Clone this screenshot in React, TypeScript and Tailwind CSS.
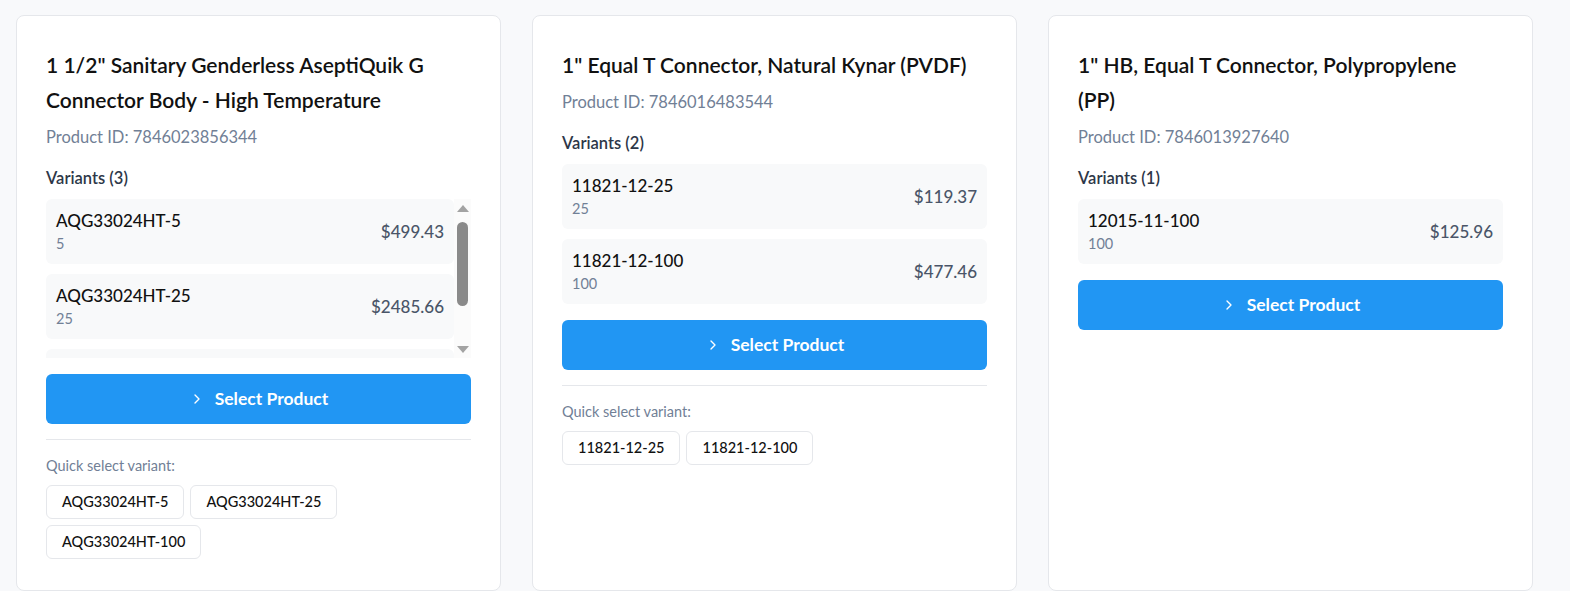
import { ChevronRight } from 'lucide-react';

type Variant = { sku: string; qty: string; price: string };
type Product = { title: string; id: string; variants: Variant[] };

const products: Product[] = [
  {
    title: '1 1/2" Sanitary Genderless AseptiQuik G Connector Body - High Temperature',
    id: '7846023856344',
    variants: [
      { sku: 'AQG33024HT-5', qty: '5', price: '$499.43' },
      { sku: 'AQG33024HT-25', qty: '25', price: '$2485.66' },
      { sku: 'AQG33024HT-100', qty: '100', price: '$9942.64' },
    ],
  },
  {
    title: '1" Equal T Connector, Natural Kynar (PVDF)',
    id: '7846016483544',
    variants: [
      { sku: '11821-12-25', qty: '25', price: '$119.37' },
      { sku: '11821-12-100', qty: '100', price: '$477.46' },
    ],
  },
  {
    title: '1" HB, Equal T Connector, Polypropylene (PP)',
    id: '7846013927640',
    variants: [{ sku: '12015-11-100', qty: '100', price: '$125.96' }],
  },
];

function VariantRow({ v }: { v: Variant }) {
  return (
    <div className="flex items-center justify-between bg-[#f8f9fa] rounded-md px-2.5 py-2.5 shrink-0">
      <div>
        <div className="text-[17px] leading-6 font-medium text-[#111]">{v.sku}</div>
        <div className="text-[14.5px] leading-[21px] text-[#718096]">{v.qty}</div>
      </div>
      <div className="text-[17px] font-medium text-[#4a5568]">{v.price}</div>
    </div>
  );
}

// classic windows-style scrollbar next to the long variant list
function Scrollbar() {
  return (
    <div className="w-[17px] shrink-0 flex flex-col items-center bg-[#fbfbfb]">
      <svg width="12" height="7" viewBox="0 0 12 7" className="mt-[6px]">
        <path d="M6 0 L12 7 L0 7 Z" fill="#a3a3a3" />
      </svg>
      <div className="mt-[10px] h-[84px] w-[11px] rounded-full bg-[#8a8a8a]" />
      <div className="flex-1" />
      <svg width="12" height="7" viewBox="0 0 12 7" className="mb-[5px]">
        <path d="M0 0 L12 0 L6 7 Z" fill="#a3a3a3" />
      </svg>
    </div>
  );
}

function ProductCard({ product }: { product: Product }) {
  const scrolls = product.variants.length > 2;

  return (
    <div className="bg-white border border-gray-200 rounded-lg px-[29px] pt-[31px] pb-[31px] flex flex-col">
      <h2 className="pr-3 text-[21px] leading-[35px] font-semibold text-[#111]">{product.title}</h2>
      <div className="mt-2 text-[16.5px] leading-6 text-[#718096]">Product ID: {product.id}</div>

      <div className="mt-[17px] text-[16.5px] leading-6 font-semibold text-[#2d3748]">
        Variants ({product.variants.length})
      </div>

      {/* Variant list */}
      {scrolls ? (
        <div className="mt-[9px] flex h-[159px]">
          <div className="flex-1 min-w-0 overflow-hidden flex flex-col gap-2.5">
            {product.variants.map((v) => (
              <VariantRow key={v.sku} v={v} />
            ))}
          </div>
          <Scrollbar />
        </div>
      ) : (
        <div className="mt-[9px] flex flex-col gap-2.5">
          {product.variants.map((v) => (
            <VariantRow key={v.sku} v={v} />
          ))}
        </div>
      )}

      <button className="mt-4 h-[50px] w-full rounded-md bg-[#2196f3] text-white flex items-center justify-center gap-2.5 text-[17.5px] font-bold">
        <ChevronRight size={16} strokeWidth={2} />
        Select Product
      </button>

      {product.variants.length > 1 && (
        <div className="mt-[15px] border-t border-gray-200 pt-4">
          <div className="text-[14.5px] leading-5 text-[#718096]">Quick select variant:</div>
          <div className="mt-[9px] flex flex-wrap gap-1.5">
            {product.variants.map((v) => (
              <button
                key={v.sku}
                className="border border-gray-200 rounded-md px-[15px] py-1.5 text-[14.5px] leading-5 font-medium text-[#111] bg-white"
              >
                {v.sku}
              </button>
            ))}
          </div>
        </div>
      )}
    </div>
  );
}

export default function App() {
  return (
    <div
      className="min-h-screen bg-[#f8f9fb] pl-4 pr-[37px] pt-[15px]"
      style={{ fontFamily: '"Segoe UI", Lato, sans-serif' }}
    >
      <div className="grid grid-cols-3 gap-[31px] items-stretch">
        {products.map((p) => (
          <ProductCard key={p.id} product={p} />
        ))}
      </div>
    </div>
  );
}
